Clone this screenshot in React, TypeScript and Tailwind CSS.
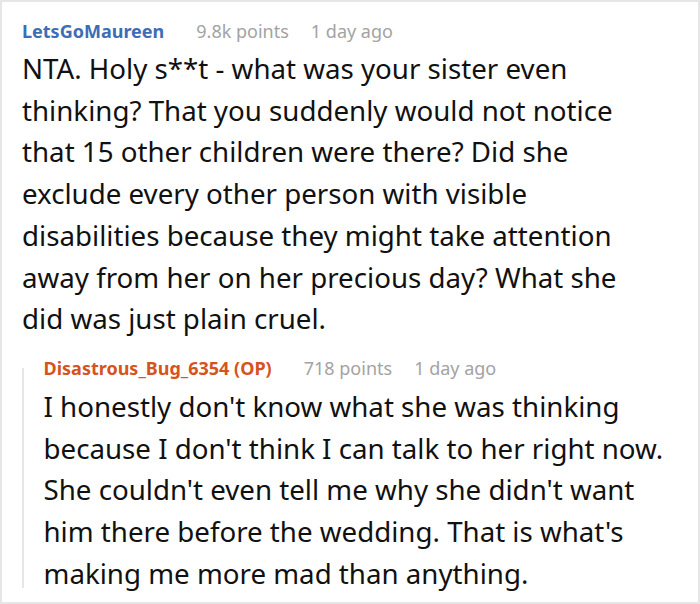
import React from "react";

export default function App() {
  return (
    <div className="w-[700px] h-[604px] bg-white border-2 border-[#e6e6e6] box-border overflow-hidden" style={{ fontFamily: '"Noto Sans", "Open Sans", sans-serif' }}>
      <div className="pl-[20px] pt-[17px]">
        <div className="flex items-baseline text-[18px] leading-[24px] whitespace-nowrap">
          <span className="font-bold text-[#3d6db5]">LetsGoMaureen</span>
          <span className="ml-[32px] text-[#a3a3a3]">9.8k points</span>
          <span className="ml-[22px] text-[#a3a3a3]">1 day ago</span>
        </div>
        <div className="mt-[5px] w-[602px] text-[27.7px] leading-[41.7px] text-[#111]">
          NTA. Holy s**t - what was your sister even thinking? That you suddenly would not notice that 15 other children were there? Did she exclude every other person with visible disabilities because they might take attention away from her on her precious day? What she did was just plain cruel.
        </div>
      </div>
      <div className="ml-[20px] mt-[16px] flex">
        <div className="w-[2px] bg-[#e6e6e6] mt-[12px] mb-[6px] shrink-0" />
        <div className="pl-[19.5px]">
          <div className="flex items-baseline text-[18px] leading-[24px] whitespace-nowrap">
            <span className="font-bold text-[#d6531d]">Disastrous_Bug_6354 (OP)</span>
            <span className="ml-[32px] text-[#a3a3a3]">718 points</span>
            <span className="ml-[22px] text-[#a3a3a3]">1 day ago</span>
          </div>
          <div className="mt-[6px] w-[630px] text-[27.7px] leading-[41.7px] text-[#111]">
            I honestly don't know what she was thinking because I don't think I can talk to her right now. She couldn't even tell me why she didn't want him there before the wedding. That is what's making me more mad than anything.
          </div>
        </div>
      </div>
    </div>
  );
}
